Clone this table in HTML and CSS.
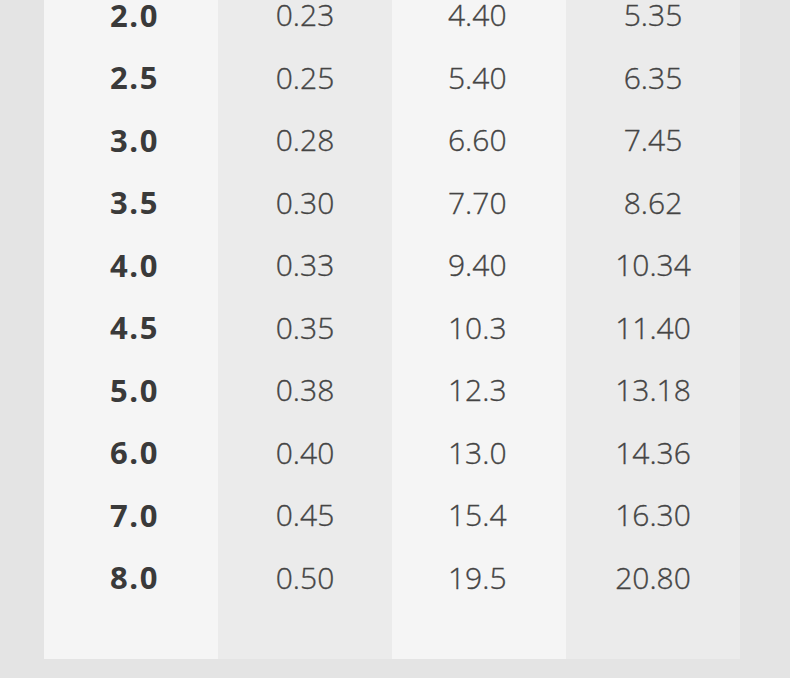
FILE: index.html
```html
<!DOCTYPE html>
<html lang="en">
<head>
<meta charset="utf-8">
<title>Size table</title>
<link rel="stylesheet" href="styles.css">
</head>
<body>
<div class="sheet">
  <div class="col col-light col-key">
    <div class="cell">2.0</div><div class="cell">2.5</div><div class="cell">3.0</div><div class="cell">3.5</div><div class="cell">4.0</div><div class="cell">4.5</div><div class="cell">5.0</div><div class="cell">6.0</div><div class="cell">7.0</div><div class="cell">8.0</div>
  </div>
  <div class="col col-dark">
    <div class="cell">0.23</div><div class="cell">0.25</div><div class="cell">0.28</div><div class="cell">0.30</div><div class="cell">0.33</div><div class="cell">0.35</div><div class="cell">0.38</div><div class="cell">0.40</div><div class="cell">0.45</div><div class="cell">0.50</div>
  </div>
  <div class="col col-light col-left">
    <div class="cell">4.40</div><div class="cell">5.40</div><div class="cell">6.60</div><div class="cell">7.70</div><div class="cell">9.40</div><div class="cell">10.3</div><div class="cell">12.3</div><div class="cell">13.0</div><div class="cell">15.4</div><div class="cell">19.5</div>
  </div>
  <div class="col col-dark">
    <div class="cell">5.35</div><div class="cell">6.35</div><div class="cell">7.45</div><div class="cell">8.62</div><div class="cell">10.34</div><div class="cell">11.40</div><div class="cell">13.18</div><div class="cell">14.36</div><div class="cell">16.30</div><div class="cell">20.80</div>
  </div>
</div>
</body>
</html>
```

FILE: styles.css
```css
html, body {
  margin: 0;
  padding: 0;
  background: #e4e4e4;
  overflow: hidden;
  height: 100%;
}
body {
  font-family: "Open Sans", "Noto Sans", sans-serif;
  color: #444444;
}
.sheet {
  display: flex;
  margin-left: 44px;
  width: 696px;
}
.col {
  width: 174px;
  display: flex;
  flex-direction: column;
  padding-bottom: 50px;
}
.col-light { background: #f5f5f5; }
.col-dark { background: #ebebeb; }
.cell {
  height: 62.5px;
  display: flex;
  align-items: center;
  justify-content: center;
  font-size: 30px;
  font-weight: 300;
  -webkit-text-stroke: 0.35px currentColor;
  line-height: 1;
}
.cell:first-child {
  height: 46.5px;
  align-items: flex-start;
  padding-top: 0.3px;
  box-sizing: border-box;
}
.col-key .cell {
  font-weight: 700;
  font-size: 31px;
  letter-spacing: 1.5px;
  -webkit-text-stroke: 0;
  color: #3a3a3a;
  padding-left: 7px;
}
.col-left .cell {
  justify-content: flex-start;
  padding-left: 56px;
}
```
